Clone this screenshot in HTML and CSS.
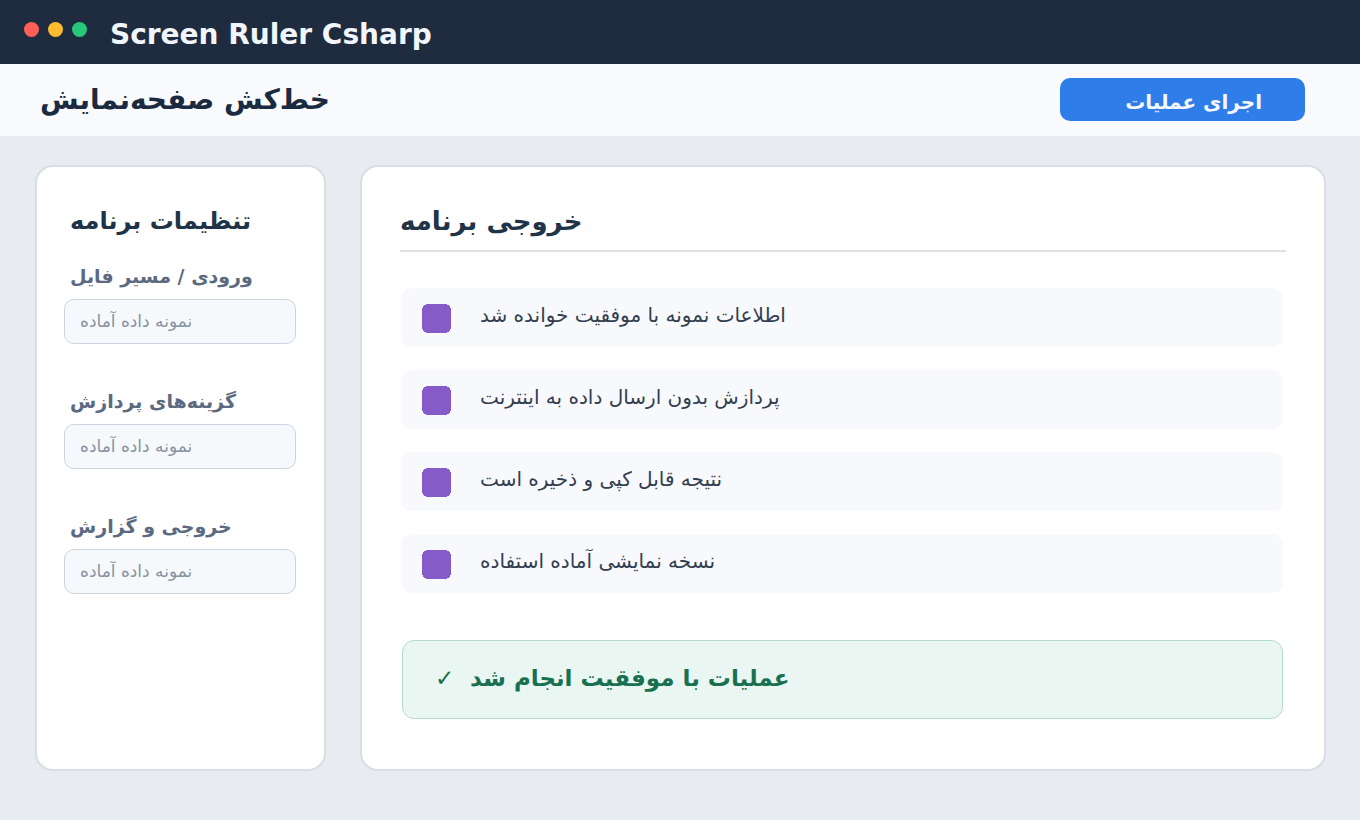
FILE: index.html
```html
<!DOCTYPE html>
<html lang="fa">
<head>
<meta charset="utf-8">
<title>Screen Ruler Csharp</title>
<link rel="stylesheet" href="styles.css">
</head>
<body>
<header class="titlebar">
  <div class="dots"><span class="dot red"></span><span class="dot yellow"></span><span class="dot green"></span></div>
  <div class="app-title">Screen Ruler Csharp</div>
</header>
<div class="toolbar">
  <div class="page-title" dir="rtl">خط‌کش صفحه‌نمایش</div>
  <button class="run" dir="rtl">اجرای عملیات</button>
</div>
<div class="content">
  <aside class="card side">
    <h2 class="side-title" dir="rtl">تنظیمات برنامه</h2>
    <div class="field">
      <div class="label" dir="rtl">ورودی / مسیر فایل</div>
      <div class="input" dir="rtl">نمونه داده آماده</div>
    </div>
    <div class="field">
      <div class="label" dir="rtl">گزینه‌های پردازش</div>
      <div class="input" dir="rtl">نمونه داده آماده</div>
    </div>
    <div class="field">
      <div class="label" dir="rtl">خروجی و گزارش</div>
      <div class="input" dir="rtl">نمونه داده آماده</div>
    </div>
  </aside>
  <main class="card output">
    <div class="out-head"><h2 class="out-title" dir="rtl">خروجی برنامه</h2></div>
    <div class="list">
      <div class="row"><svg class="sq" viewBox="0 0 29 29"><rect width="29" height="29" rx="6"/></svg><span class="row-text" dir="rtl">اطلاعات نمونه با موفقیت خوانده شد</span></div>
      <div class="row"><svg class="sq" viewBox="0 0 29 29"><rect width="29" height="29" rx="6"/></svg><span class="row-text" dir="rtl">پردازش بدون ارسال داده به اینترنت</span></div>
      <div class="row"><svg class="sq" viewBox="0 0 29 29"><rect width="29" height="29" rx="6"/></svg><span class="row-text" dir="rtl">نتیجه قابل کپی و ذخیره است</span></div>
      <div class="row"><svg class="sq" viewBox="0 0 29 29"><rect width="29" height="29" rx="6"/></svg><span class="row-text" dir="rtl">نسخه نمایشی آماده استفاده</span></div>
    </div>
    <div class="success"><span class="check">✓</span><span class="success-text" dir="rtl">عملیات با موفقیت انجام شد</span></div>
  </main>
</div>
</body>
</html>
```
FILE: styles.css
```css
* { box-sizing: border-box; }
html, body { margin: 0; height: 820px; overflow: hidden; }
body { font-family: "DejaVu Sans", sans-serif; background: #e8ebf0; color: #1e2a3c; }

.titlebar { height: 64px; background: #1f2b3e; display: flex; align-items: center; padding-left: 24px; }
.dots { display: flex; gap: 9px; margin-top: -6px; }
.dot { width: 15px; height: 15px; border-radius: 50%; }
.red { background: #ff5f57; }
.yellow { background: #febc2e; }
.green { background: #28c779; }
.app-title { margin-left: 23px; margin-top: 4px; font-size: 28px; font-weight: 700; color: #f1f6fc; }

.toolbar { height: 72px; background: #f8fafe; display: flex; align-items: center; justify-content: space-between; padding: 0 55px 0 40px; }
.page-title { font-size: 28px; font-weight: 700; color: #1a2a40; margin-top: -2px; }
.run { width: 245px; height: 43px; margin-top: -1px; border: 0; border-radius: 10px; background: #2f7de9; color: #f4f8fe; font: 700 20px "DejaVu Sans", sans-serif; padding: 5px 43px 0 0; text-align: right; }

.content { display: flex; gap: 34px; padding: 29px 34px 49px 35px; height: 684px; }
.card { background: #fff; border: 2px solid #d8dde7; border-radius: 18px; }
.side { width: 291px; flex: none; padding: 36px 28px 0 27px; }
.side-title { margin: 0 0 0 6px; width: fit-content; font-size: 24px; font-weight: 700; color: #1f3349; line-height: 36px; }
.side-title + .field { margin-top: 25px; }
.field + .field { margin-top: 45px; }
.label { margin-left: 6px; font-size: 19px; font-weight: 700; color: #5b6a80; line-height: 24px; width: fit-content; }
.input { margin-top: 11px; height: 45px; border: 1px solid #ccd3dd; border-radius: 10px; background: #f6f9fc; color: #8792a2; font-size: 17px; line-height: 43px; padding: 0 15px; display: flex; justify-content: flex-end; }

.output { flex: 1; padding: 36px 38px 0 38px; }
.out-head { height: 49px; border-bottom: 2px solid #dfe3e8; }
.out-title { margin: 0; width: fit-content; font-size: 26px; font-weight: 700; color: #1f3349; line-height: 36px; }
.list { display: flex; flex-direction: column; gap: 23px; margin-top: 36px; width: 882px; margin-left: 1px; }
.row { height: 59px; background: #f8f9fc; border-radius: 10px; display: flex; align-items: center; padding-left: 21px; }
.sq { width: 29px; height: 29px; fill: #865bc9; shape-rendering: crispEdges; flex: none; margin-top: 1px; }
.row-text { margin-left: 29px; font-size: 20px; color: #333e50; margin-top: -5px; }
.success { margin: 47px 0 0 2px; width: 881px; height: 79px; background: #e9f6f1; border: 1px solid #b4dccb; border-radius: 12px; display: flex; align-items: center; padding: 0 0 3px 32px; color: #187050; }
.check { font-size: 23px; width: 35px; }
.success-text { font-size: 23px; font-weight: 700; }
```
